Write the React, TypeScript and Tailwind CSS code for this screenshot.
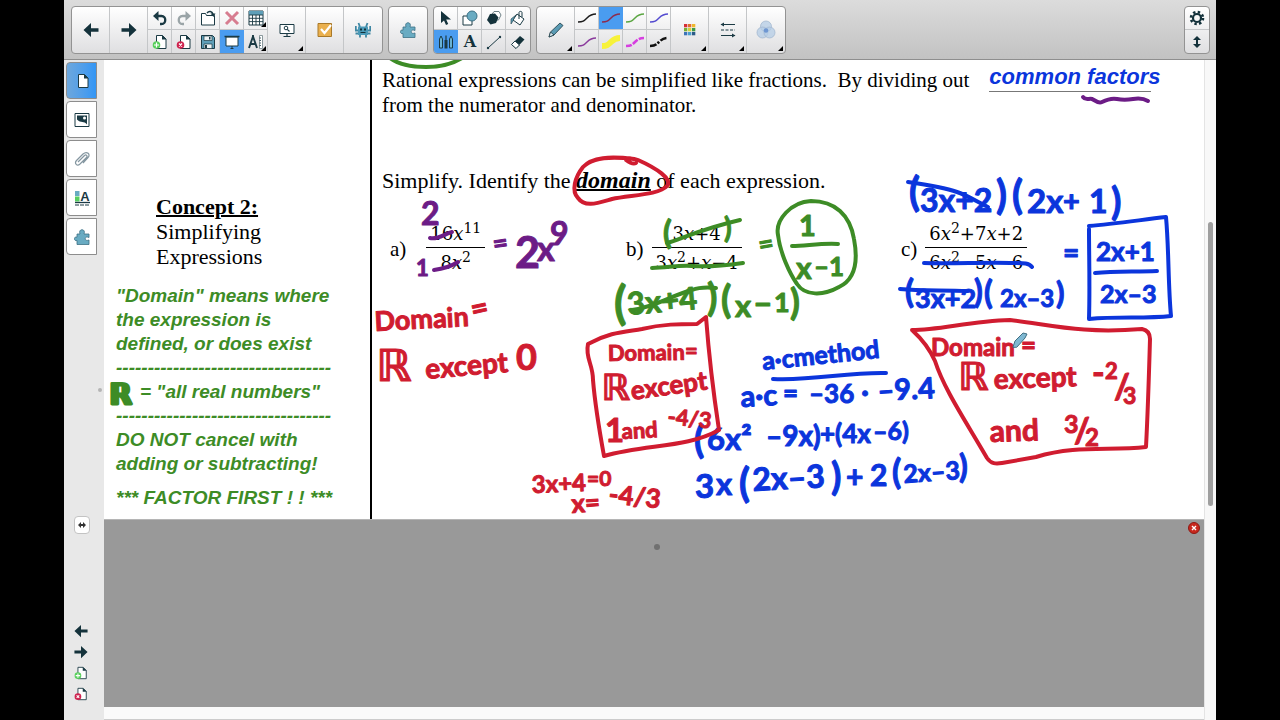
import type { ReactNode } from "react";
import { clsx } from "clsx";

const DARK = "#1b3a44";
const TEAL = "#5f9fb8";

function ToolButton({ label, wide, active, menu, children }: { label: string; wide?: boolean; active?: boolean; menu?: boolean; children: ReactNode }) {
  return (
    <button
      type="button"
      aria-label={label}
      title={label}
      className={clsx(
        "relative flex items-center justify-center",
        wide ? "w-[38px] h-[46px]" : "w-6 h-[23px]",
        active ? "bg-[#4a9cf0]" : "bg-transparent"
      )}
    >
      {children}
      {menu && (
        <svg className="absolute right-0.5 bottom-0.5 w-[5px] h-[5px]" viewBox="0 0 5 5">
          <path d="M5 0v5H0z" fill="#000" />
        </svg>
      )}
    </button>
  );
}

function ToolGroup({ children }: { children: ReactNode }) {
  return (
    <div className="flex h-12 divide-x divide-[#c4c6c8] rounded border border-[#939393] bg-linear-to-b from-white to-[#dfdfe1] overflow-hidden">
      {children}
    </div>
  );
}

function Pair({ children }: { children: ReactNode }) {
  return <div className="flex flex-col divide-y divide-[#c4c6c8] w-6 shrink-0">{children}</div>;
}

function ArrowIcon({ right, size = "w-4 h-4" }: { right?: boolean; size?: string }) {
  return (
    <svg className={clsx(size, right && "rotate-180")} viewBox="0 0 16 16">
      <path d="M.5 8L8 1v5.200h7.500v3.600H8V15z" fill="#14323b" />
    </svg>
  );
}

function PageIcon({ badge, size = "w-4 h-4" }: { badge?: "add" | "remove"; size?: string }) {
  const color = badge === "add" ? "#58cf5c" : "#cf2450";
  return (
    <svg className={size} viewBox="0 0 16 16">
      <path d="M4.500 1.500h6l3.500 3.500v9.500h-9.500z" fill="#fff" stroke={DARK} strokeWidth="1" />
      <path d="M10 1l4.500 4.500H10z" fill={DARK} />
      {badge && <circle cx="4.500" cy="11" r="3.800" fill={color} />}
      {badge === "add" && <path d="M4.500 8.500v5M2 11h5" stroke="#fff" strokeWidth="1.200" />}
      {badge === "remove" && <path d="M3 9.500l3 3M6 9.500l-3 3" stroke="#fff" strokeWidth="1.200" />}
    </svg>
  );
}

function PuzzleIcon({ size = "w-4 h-4" }: { size?: string }) {
  return (
    <svg className={size} viewBox="0 0 16 16">
      <path
        d="M3 5h3C5 2.500 6 .7 8 .7s3 1.800 2 4.300h5v3.500c-2.500-1-3.800-.2-3.800 1.200s1.300 2.300 3.800 1.300v4.500H3v-4c-1.500.5-2.700-.5-2.700-1.700S1.500 7.500 3 8.200z"
        fill="#69abc2"
        stroke="#3d7185"
        strokeWidth=".8"
      />
    </svg>
  );
}

function UndoIcon({ redo }: { redo?: boolean }) {
  const color = redo ? "#9aa4a7" : DARK;
  return (
    <svg className={clsx("w-4 h-4", redo && "-scale-x-100")} viewBox="0 0 16 16">
      <path d="M4 6h5.500c5 0 5 8 0 8H8" fill="none" stroke={color} strokeWidth="2.300" />
      <path d="M1 6l5.500-5v10z" fill={color} />
    </svg>
  );
}

function PenStroke({ color, width = 1.5, dash }: { color: string; width?: number; dash?: string }) {
  return (
    <svg className="w-5 h-4" viewBox="0 0 20 16">
      <path d="M1 12c5 0 6-1 9-4s5-4 9-4" fill="none" stroke={color} strokeWidth={width} strokeDasharray={dash} strokeLinecap="butt" />
    </svg>
  );
}

function Toolbar() {
  const grid = ["#d62f36", "#e06f2c", "#f0b72d", "#7aae35", "#cfd33c", "#3f9a46", "#3c73b8", "#4b9fce", "#2b5b88"];
  return (
    <header className="flex items-start h-[60px] pt-1.5 pl-[7px] pr-1.5 gap-[5px] border-b border-[#8e8e8e] bg-linear-to-b from-[#dcdcdc] to-[#c2c2c2]">
      <ToolGroup>
        <ToolButton label="Previous page" wide><ArrowIcon /></ToolButton>
        <ToolButton label="Next page" wide><ArrowIcon right /></ToolButton>
        <Pair>
          <ToolButton label="Undo"><UndoIcon /></ToolButton>
          <ToolButton label="Add page"><PageIcon badge="add" /></ToolButton>
        </Pair>
        <Pair>
          <ToolButton label="Redo"><UndoIcon redo /></ToolButton>
          <ToolButton label="Delete page"><PageIcon badge="remove" /></ToolButton>
        </Pair>
        <Pair>
          <ToolButton label="Open">
            <svg className="w-4 h-4" viewBox="0 0 16 16">
              <path d="M1.500 15V3.500h4l1 2h8V15z" fill="#fff" stroke={DARK} />
              <path d="M7 3c2-2.500 5-2 6 1" fill="none" stroke={DARK} strokeWidth="1.500" />
              <path d="M10.500 3.500h5L13.500 7z" fill={DARK} />
            </svg>
          </ToolButton>
          <ToolButton label="Save">
            <svg className="w-4 h-4" viewBox="0 0 16 16">
              <path d="M1.500 1.500h11l2 2v11h-13z" fill={TEAL} stroke={DARK} />
              <path d="M4 2h8v4.500H4zM4 10h8v4.500H4z" fill="#eef4f6" stroke={DARK} strokeWidth=".7" />
              <path d="M9 3h1.500v2.500H9zM5 11h2v3H5z" fill={DARK} />
            </svg>
          </ToolButton>
        </Pair>
        <Pair>
          <ToolButton label="Delete">
            <svg className="w-4 h-4" viewBox="0 0 16 16">
              <path d="M2 2l12 12M14 2L2 14" stroke="#d77d90" strokeWidth="3" />
            </svg>
          </ToolButton>
          <ToolButton label="Screen shade" active>
            <svg className="w-4 h-4" viewBox="0 0 16 16">
              <path d="M2 3h12v9H2z" fill="#fff" stroke={DARK} />
              <path d="M.5 2.500h15" stroke={DARK} strokeWidth="1.500" />
              <path d="M8 12v3M6.500 14.500h3" stroke={DARK} />
            </svg>
          </ToolButton>
        </Pair>
        <Pair>
          <ToolButton label="Table" menu>
            <svg className="w-4 h-4" viewBox="0 0 16 16">
              <path d="M1 1h14v14H1z" fill="#fff" stroke={DARK} />
              <path d="M1 1h14v4H1z" fill={TEAL} />
              <path d="M1 5h14M1 8.300h14M1 11.600h14M4.500 5v10M8 5v10M11.500 5v10" stroke={DARK} strokeWidth=".9" />
            </svg>
          </ToolButton>
          <ToolButton label="Measurement tools" menu>
            <svg className="w-4 h-4" viewBox="0 0 16 16">
              <path d="M5 1v3M4.800 3L1 14M5.200 3L9 14M2 10h5.500" fill="none" stroke={DARK} strokeWidth="1.900" />
              <path d="M11.500 1.500h3v13h-3z" fill="#fff" stroke="#6e8187" strokeWidth=".8" />
              <path d="M11.500 4H13M11.500 6.500H13M11.500 9H13M11.500 11.500H13" stroke={DARK} strokeWidth=".8" />
            </svg>
          </ToolButton>
        </Pair>
        <ToolButton label="Screen capture" wide menu>
          <svg className="w-4 h-4" viewBox="0 0 16 16">
            <path d="M1 2.500h14v9H1z" fill="#fff" stroke={DARK} />
            <circle cx="7" cy="6" r="1.800" fill="none" stroke={DARK} />
            <path d="M8.300 7.300L10.500 9.500M4.500 14.500h7M8 12v2.500" stroke={DARK} strokeWidth="1.200" />
          </svg>
        </ToolButton>
        <ToolButton label="Response" wide>
          <svg className="w-4 h-4" viewBox="0 0 16 16">
            <path d="M1 1.500h13.500v13H1z" fill="#eab04e" stroke="#a97929" />
            <path d="M4 7l3.500 4L14 3" fill="none" stroke="#fff" strokeWidth="2.200" />
          </svg>
        </ToolButton>
        <ToolButton label="Activity builder" wide>
          <svg className="w-4 h-4" viewBox="0 0 16 16">
            <path d="M3.500 1l1.500 4M12.500 1L11 5M.8 4v4.500H3M15.200 4v4.500H13M.5 11.500h15M5 12v3.500M11 12v3.500" fill="none" stroke="#3f87a3" strokeWidth="1.800" />
            <path d="M3 4.500h10v8.500H3z" fill="#4b9ab8" />
            <path d="M5 6.500h2v2H5zM9 6.500h2v2H9zM5.500 10h5v1h-5z" fill="#14323b" />
          </svg>
        </ToolButton>
      </ToolGroup>
      <ToolGroup>
        <ToolButton label="Add-ons" wide><PuzzleIcon /></ToolButton>
      </ToolGroup>
      <ToolGroup>
        <Pair>
          <ToolButton label="Select">
            <svg className="w-4 h-4" viewBox="0 0 16 16"><path d="M3 1v12l3-2.500L8 15l2.200-1-2-4.500H13z" fill="#14323b" /></svg>
          </ToolButton>
          <ToolButton label="Pens" active>
            <svg className="w-4 h-4" viewBox="0 0 16 16">
              <path d="M1.500 14V5L3 2l1.500 3v9zM11.500 14V5L13 2l1.500 3v9z" fill="#69b2d4" stroke={DARK} />
              <path d="M8 1.500v5" stroke={DARK} strokeWidth="1.200" />
              <path d="M6.500 6h3v8.500h-3z" fill={DARK} />
            </svg>
          </ToolButton>
        </Pair>
        <Pair>
          <ToolButton label="Shapes">
            <svg className="w-4 h-4" viewBox="0 0 16 16">
              <path d="M1 6h9v9H1z" fill="#fff" stroke={DARK} />
              <circle cx="10" cy="6" r="5" fill="#69abc2" stroke="#3d7185" />
            </svg>
          </ToolButton>
          <ToolButton label="Text">
            <span className="text-base leading-5 font-bold font-['DejaVu_Serif',serif] text-[#14323b]">A</span>
          </ToolButton>
        </Pair>
        <Pair>
          <ToolButton label="Regular polygons">
            <svg className="w-4 h-4" viewBox="0 0 16 16">
              <path d="M8 1.500h5l2 3.500-2.500 5H8L5.500 5z" fill="#fff" stroke="#6e8187" />
              <path d="M4 4l5-.5 3.500 4L10 13l-5.500 1.500L1 10z" fill="#14323b" />
            </svg>
          </ToolButton>
          <ToolButton label="Lines">
            <svg className="w-4 h-4" viewBox="0 0 16 16">
              <path d="M2 14L14 3" stroke={DARK} />
              <circle cx="2" cy="14" r="1.200" fill={DARK} />
              <circle cx="14" cy="3" r="1.200" fill={DARK} />
            </svg>
          </ToolButton>
        </Pair>
        <Pair>
          <ToolButton label="Fill">
            <svg className="w-4 h-4" viewBox="0 0 16 16">
              <path d="M7 4l7 5-4 6-7-5z" fill="#fff" stroke={DARK} />
              <path d="M9 9V2.500c0-1.500 3-1.500 3 0V7" fill="none" stroke={DARK} />
              <path d="M6 5L1 9v5l2-3 1-3z" fill={TEAL} stroke={DARK} strokeWidth=".6" />
            </svg>
          </ToolButton>
          <ToolButton label="Eraser">
            <svg className="w-4 h-4" viewBox="0 0 16 16">
              <path d="M1.500 10.500L10 2l4.500 3.500-8.500 9z" fill="#14323b" />
              <path d="M1.500 10.500L5 7l4.500 4L6 14.500z" fill="#fff" stroke={DARK} />
            </svg>
          </ToolButton>
        </Pair>
      </ToolGroup>
      <ToolGroup>
        <ToolButton label="Pen types" wide menu>
          <svg className="w-4 h-4" viewBox="0 0 16 16">
            <path d="M1 15l1.500-5L12 1l3 2.500L6 13z" fill="#5a9bb4" stroke={DARK} strokeWidth=".8" />
            <path d="M1 15l1.500-5L6 13z" fill="#dceaf0" stroke={DARK} strokeWidth=".8" />
          </svg>
        </ToolButton>
        <Pair>
          <ToolButton label="Black pen"><PenStroke color="#1c1c1c" /></ToolButton>
          <ToolButton label="Purple pen"><PenStroke color="#8a3a9c" /></ToolButton>
        </Pair>
        <Pair>
          <ToolButton label="Red pen" active><PenStroke color="#8c2c4e" /></ToolButton>
          <ToolButton label="Yellow highlighter"><PenStroke color="#f7f23a" width={6} /></ToolButton>
        </Pair>
        <Pair>
          <ToolButton label="Green pen"><PenStroke color="#5ba642" /></ToolButton>
          <ToolButton label="Magenta dashed pen"><PenStroke color="#d63fe0" width={2.5} dash="6 1.5" /></ToolButton>
        </Pair>
        <Pair>
          <ToolButton label="Blue pen"><PenStroke color="#544bd0" /></ToolButton>
          <ToolButton label="Black dashed pen"><PenStroke color="#111" width={2.5} dash="7 1.5 2 1.5" /></ToolButton>
        </Pair>
        <ToolButton label="Color" wide menu>
          <svg className="w-3 h-3" viewBox="0 0 12 12">
            {grid.map((c, i) => (
              <rect key={c} x={(i % 3) * 4} y={Math.floor(i / 3) * 4} width="3.300" height="3.300" fill={c} />
            ))}
          </svg>
        </ToolButton>
        <ToolButton label="Line style" wide menu>
          <svg className="w-4 h-4" viewBox="0 0 16 16">
            <path d="M1 2.500h14M1 13.500h14" stroke={DARK} />
            <path d="M1 8h14" stroke={DARK} strokeDasharray="3 1.500" />
            <path d="M4 .5v4L.5 2.500zM12 11.500v4l3.500-2z" fill={DARK} />
          </svg>
        </ToolButton>
        <ToolButton label="Transparency" wide menu>
          <svg className="w-5 h-5" viewBox="0 0 20 20">
            <circle cx="10" cy="6.500" r="5.500" fill="#b4cce6" fillOpacity=".75" stroke="#9fb5cd" strokeWidth=".7" />
            <circle cx="6.500" cy="12.500" r="5.500" fill="#b4cce6" fillOpacity=".75" stroke="#9fb5cd" strokeWidth=".7" />
            <circle cx="13.500" cy="12.500" r="5.500" fill="#b4cce6" fillOpacity=".75" stroke="#9fb5cd" strokeWidth=".7" />
            <circle cx="10" cy="10.500" r="2.300" fill="#6f97d2" />
          </svg>
        </ToolButton>
      </ToolGroup>
      <div className="ml-auto">
        <ToolGroup>
          <Pair>
            <ToolButton label="Settings">
              <svg className="w-4 h-4" viewBox="0 0 16 16">
                <circle cx="8" cy="8" r="6" fill="none" stroke="#14323b" strokeWidth="2.600" strokeDasharray="2.400 2.312" />
                <circle cx="8" cy="8" r="4" fill="none" stroke="#14323b" strokeWidth="2.200" />
              </svg>
            </ToolButton>
            <ToolButton label="Move toolbar">
              <svg className="w-3 h-3" viewBox="0 0 12 12"><path d="M6 0l4 4H7v4h3l-4 4-4-4h3V4H2z" fill="#14323b" /></svg>
            </ToolButton>
          </Pair>
        </ToolGroup>
      </div>
    </header>
  );
}

function SideTab({ label, active, children }: { label: string; active?: boolean; children: ReactNode }) {
  return (
    <button
      type="button"
      aria-label={label}
      title={label}
      className={clsx(
        "flex items-center justify-center w-[31px] h-[37px] rounded-l border border-[#8d8d8d]",
        active ? "bg-linear-to-r from-[#6da7dc] to-[#3296f5]" : "bg-white"
      )}
    >
      {children}
    </button>
  );
}

function Sidebar() {
  return (
    <nav className="relative flex flex-col w-10 shrink-0 bg-[#e8e8e8] pt-0.5 pb-[19px]">
      <div className="flex flex-col gap-0.5 pl-0.5">
        <SideTab label="Page sorter" active><PageIcon /></SideTab>
        <SideTab label="Gallery">
          <svg className="w-4 h-4" viewBox="0 0 16 16">
            <path d="M1 1.500h14v13H1z" fill="#fff" stroke={DARK} />
            <path d="M3 3.500h10v9c-3-4-6-1-10-5z" fill={DARK} />
            <circle cx="10.500" cy="6" r="1.500" fill="#fff" />
          </svg>
        </SideTab>
        <SideTab label="Attachments">
          <svg className="w-4 h-4" viewBox="0 0 16 16">
            <path d="M4 11l6.500-6.500c1.500-1.500 3.500.5 2 2L6 13c-3 2.500-6-.5-3.500-3.500l6.500-6.500c4-3.500 8 .5 5 3.500L9 12" fill="none" stroke="#8496a0" strokeWidth="1.200" />
          </svg>
        </SideTab>
        <SideTab label="Properties">
          <svg className="w-4 h-4" viewBox="0 0 16 16">
            <path d="M1 1h4.500v5H1z" fill="#69abc2" />
            <path d="M1 6.500h4.500v5H1z" fill="#57ce61" />
            <text x="11" y="11" textAnchor="middle" fontSize="13" fontWeight="700" fontFamily="Liberation Sans, sans-serif" fill={DARK}>A</text>
            <path d="M1 12.500h15" stroke={DARK} strokeWidth="1.300" />
            <path d="M1 15h15" stroke={DARK} strokeDasharray="4 1" />
          </svg>
        </SideTab>
        <SideTab label="Add-ons"><PuzzleIcon /></SideTab>
      </div>
      <span className="absolute right-0.5 top-[328px] w-1 h-1 rounded-full bg-[#b5b5b5]" />
      <button type="button" aria-label="Auto-hide" className="absolute left-2.5 top-[456px] flex items-center justify-center w-4 h-[18px] rounded border border-[#c3c3c3] bg-white">
        <svg className="w-2 h-2" viewBox="0 0 8 8"><path d="M0 4l3-3v2h2V1l3 3-3 3V5H3v2z" fill="#333" /></svg>
      </button>
      <div className="mt-auto flex flex-col gap-[7px] items-center w-8 pl-0.5">
        <button type="button" aria-label="Back"><ArrowIcon size="block w-3.5 h-3.5" /></button>
        <button type="button" aria-label="Forward"><ArrowIcon right size="block w-3.5 h-3.5" /></button>
        <button type="button" aria-label="Insert page"><PageIcon badge="add" size="block w-3.5 h-3.5" /></button>
        <button type="button" aria-label="Remove page"><PageIcon badge="remove" size="block w-3.5 h-3.5" /></button>
      </div>
    </nav>
  );
}

// text, x, baseline, size, tilt in degrees
type Note = [string, number, number, number, number?];

const purple: Note[] = [
  ["2", 421, 225, 32],
  ["1", 416, 276, 22],
  ["=", 494, 253, 26, -8],
  ["2", 515, 268, 43],
  ["x", 537, 261, 34],
  ["9", 550, 245, 32],
];

const red: Note[] = [
  ["Domain", 375, 331, 27, -3],
  ["=", 473, 320, 30, -12],
  ["ℝ", 376, 381, 44],
  ["except", 426, 379, 28, -5],
  ["0", 516, 370, 36],
  ["Domain", 608, 361, 22, -1],
  ["=", 685, 359, 22],
  ["ℝ", 601, 400, 36],
  ["except", 632, 400, 26, -8],
  ["1", 605, 442, 33],
  ["and", 622, 439, 22, -3],
  ["-4/3", 667, 424, 22, 6],
  ["3x+4", 532, 493, 24, -2],
  ["=0", 587, 486, 21],
  ["x=", 572, 513, 26, -4],
  ["-4/3", 608, 503, 26, 6],
  ["Domain", 931, 356, 24],
  ["=", 1021, 354, 26],
  ["ℝ", 958, 390, 38],
  ["except", 994, 389, 28, -2],
  ["-", 1092, 385, 34],
  ["2", 1105, 379, 22],
  ["/", 1114, 399, 34],
  ["3", 1123, 404, 23],
  ["and", 990, 442, 30, -2],
  ["3", 1064, 433, 25],
  ["/", 1074, 443, 34],
  ["2", 1085, 446, 24],
];

const green: Note[] = [
  ["(", 663, 244, 32],
  [")", 724, 238, 28],
  ["=", 760, 254, 26, -10],
  ["1", 799, 236, 29],
  ["x", 796, 279, 30],
  ["–1", 814, 276, 26],
  ["(", 614, 319, 46],
  ["3x+4", 628, 315, 31, -5],
  [")", 707, 311, 38],
  ["(", 721, 313, 38],
  ["x", 735, 317, 31],
  ["–", 753, 315, 34],
  ["1", 774, 312, 27],
  [")", 790, 315, 36],
];

const blue: Note[] = [
  ["(", 909, 206, 40],
  ["3x+2", 920, 212, 32],
  [")", 996, 209, 40],
  ["(", 1012, 209, 40],
  ["2x", 1027, 213, 33],
  ["+", 1063, 211, 29],
  ["1", 1089, 213, 32],
  [")", 1111, 215, 38],
  ["(", 905, 303, 33],
  ["3x+2", 915, 308, 27],
  [")", 974, 303, 32],
  ["(", 984, 304, 32],
  ["2x–3", 1000, 307, 24],
  [")", 1056, 304, 31],
  ["=", 1063, 263, 28],
  ["2x+1", 1096, 261, 26],
  ["2x–3", 1100, 303, 25],
  ["a·cmethod", 763, 370, 25, -6],
  ["a·c", 741, 407, 29, -3],
  ["=", 783, 402, 26],
  ["–36", 809, 403, 26],
  [".", 861, 396, 34],
  ["–9.4", 878, 401, 29, -3],
  ["(", 694, 453, 38],
  ["6x²", 707, 450, 31],
  ["–9x)", 766, 446, 28],
  ["+(4x", 820, 443, 26],
  ["–6)", 873, 440, 25],
  ["3", 695, 498, 33],
  ["x", 716, 495, 31],
  ["(", 739, 497, 40],
  ["2x–3", 753, 491, 32, -3],
  [")", 831, 490, 38],
  ["+", 846, 488, 30],
  ["2", 870, 486, 30],
  ["(", 892, 484, 34],
  ["2x–3", 904, 483, 25, -4],
  [")", 959, 478, 32],
];

function Handwriting({ notes, className }: { notes: Note[]; className: string }) {
  return (
    <g className={className}>
      {notes.map(([text, x, y, size, tilt = 0], i) => (
        <text key={i} x={x} y={y} fontSize={size} transform={`rotate(${tilt} ${x} ${y})`}>
          {text}
        </text>
      ))}
    </g>
  );
}

function InkLayer() {
  return (
    <svg
      className="absolute left-0 top-0 w-[1100px] h-[459px] pointer-events-none font-['Lato','DejaVu_Sans',sans-serif] font-bold"
      viewBox="104 60 1100 459"
      strokeLinecap="round"
      strokeLinejoin="round"
    >
      <Handwriting notes={purple} className="fill-[#6c1c86] stroke-[#6c1c86]" />
      <Handwriting notes={green} className="fill-[#3d8c26] stroke-[#3d8c26]" />
      <Handwriting notes={blue} className="fill-[#0b35dc] stroke-[#0b35dc]" />
      <Handwriting notes={red} className="fill-[#d01c30] stroke-[#d01c30]" />
      <text x="109" y="404" fontSize="28" className="fill-[#3d8c26] stroke-[#3d8c26]" strokeWidth="3">ℝ</text>
      <g fill="none" strokeWidth="4">
        <g stroke="#6c1c86">
          <path d="M1083 97c3 4 6 1 9 2s6 5 10 3 10-4 15-3 10 1 16 0 10-1 15 2" />
          <path d="M430 238c8 2 14-4 22-6" />
          <path d="M434 270c8-1 16-3 24-8" />
        </g>
        <g stroke="#3d8c26">
          <path d="M390 58c8 6 20 9 36 9s28-4 36-9" />
          <path d="M667 243c14-4 34-14 73-23" />
          <path d="M652 268c15 0 25-3 40-2s30 0 51-3" />
          <path d="M792 246c14 0 28-3 46-2" />
          <path d="M632 310c24-3 40-15 60-20 8-3 14-3 24-2" />
          <path d="M811 201c-20 1-36 19-33 34 2 18 12 39 19 49 8 12 26 12 42 3 17-8 19-27 15-48-4-24-19-38-43-38z" />
        </g>
        <g stroke="#0b35dc">
          <path d="M908 182c14 2 35 5 49 10 12 4 22 11 31 15" />
          <path d="M924 263c30 1 60-1 90 0 10 0 15 0 18 4" />
          <path d="M900 289c20 2 40 1 68 2" />
          <path d="M1089 229c0 28 1 58 0 90 30-3 55 0 82-3-3-32-2-66-5-99-26 3-52 7-77 9" />
          <path d="M1095 273c20-2 40-1 62-2" />
          <path d="M773 379c40 2 74-7 113-6" />
        </g>
        <g stroke="#d01c30">
          <path d="M634 159c-24-3-42-2-51 8-8 10-12 24-5 31 7 10 20 5 34 1 18-4 47-4 55-13 6-7-11-18-29-26-5-2-12-2-12 0 4 3 8 4 10 3" />
          <path d="M588 344c22-12 36-12 54-15 20-5 38-5 55-5l9-7c3 40 8 80 13 113-32 18-72 14-115 26-6-33-9-52-11-76 0-16-8-22-5-36z" />
          <path d="M912 330c28 0 58-9 98-10 42 5 72 14 132 9 5 1 8 4 8 10-1 35-2 70-4 108-38 4-70-2-110 10l-34 6c-6 1-11 1-15-5-22-38-43-69-52-97-5-11-12-21-22-30" />
        </g>
      </g>
      <path d="M1013 347l2-6 8-8 4 1-2 4-8 9z" fill="#7fb8d2" stroke="#3f6f83" strokeWidth="1" />
    </svg>
  );
}

function Fraction({ top, bottom }: { top: ReactNode; bottom: ReactNode }) {
  return (
    <span className="inline-flex flex-col text-center text-lg font-['DejaVu_Serif',serif]">
      <span className="border-b border-black px-1 leading-[26px]">{top}</span>
      <span className="px-1 leading-[30px]">{bottom}</span>
    </span>
  );
}

function Sup({ children }: { children: ReactNode }) {
  return <sup className="text-sm leading-none">{children}</sup>;
}

function Lesson() {
  return (
    <main className="relative flex min-h-[459px] bg-white text-black overflow-hidden font-['Liberation_Serif',serif]">
      <section className="w-[268px] shrink-0 border-r-2 border-black pt-[134px] pl-3">
        <div className="pl-10 text-[22px] leading-[25px]">
          <h2 className="font-bold underline decoration-2">Concept 2:</h2>
          <p>Simplifying</p>
          <p>Expressions</p>
        </div>
        <div className="mt-[15px] font-['Liberation_Sans',sans-serif] font-bold italic text-[19px] leading-6 text-[#3d8c26] whitespace-nowrap">
          <p>"Domain" means where</p>
          <p>the expression is</p>
          <p>defined, or does exist</p>
          <p>----------------------------------</p>
          <p className="pl-6">= "all real numbers"</p>
          <p>----------------------------------</p>
          <p>DO NOT cancel with</p>
          <p>adding or subtracting!</p>
          <p className="mt-2.5">*** FACTOR FIRST ! ! ***</p>
        </div>
      </section>
      <section className="flex-1 pt-2 pl-2.5 whitespace-nowrap">
        <div className="flex text-[21px] leading-[25px]">
          <p className="whitespace-pre">Rational expressions can be simplified like fractions.  By dividing out</p>
          <span className="relative ml-5 w-[162px] h-6 border-b border-[#777]">
            <span className="absolute left-0 -top-1 font-['Liberation_Sans',sans-serif] font-bold italic text-[22px] text-[#0b35dc]">common factors</span>
          </span>
        </div>
        <p className="text-[21px] leading-[25px]">from the numerator and denominator.</p>
        <p className="mt-[50px] text-[22px] leading-[25px]">
          Simplify. Identify the <b className="italic text-2xl leading-none underline decoration-2">domain</b> of each expression.
        </p>
        <ol className="mt-7 pl-2 grid grid-cols-[236px_275px_1fr] text-[21px]">
          <li className="flex items-center gap-5">
            <span>a)</span>
            <Fraction top={<>16<i>x</i><Sup>11</Sup></>} bottom={<>8<i>x</i><Sup>2</Sup></>} />
          </li>
          <li className="flex items-center gap-2">
            <span>b)</span>
            <Fraction top={<>3<i>x</i>+4</>} bottom={<>3<i>x</i><Sup>2</Sup>+<i>x</i>−4</>} />
          </li>
          <li className="flex items-center gap-2">
            <span>c)</span>
            <Fraction top={<>6<i>x</i><Sup>2</Sup>+7<i>x</i>+2</>} bottom={<>6<i>x</i><Sup>2</Sup>−5<i>x</i>−6</>} />
          </li>
        </ol>
      </section>
      <InkLayer />
    </main>
  );
}

export default function App() {
  return (
    <div className="min-h-screen bg-black px-16 flex flex-col">
      <Toolbar />
      <div className="flex flex-1">
        <Sidebar />
        <div className="flex flex-col flex-1 min-w-0">
          <Lesson />
          <div className="relative flex-1 bg-[#999] border-t border-[#b5b5b5]">
            <span className="absolute left-1/2 top-6 w-1.5 h-1.5 rounded-full bg-[#707070]" />
            <button type="button" aria-label="Close screen shade" className="absolute right-1 top-0.5 w-3 h-3">
              <svg className="block w-3 h-3" viewBox="0 0 12 12">
                <circle cx="6" cy="6" r="5.500" fill="#c8281e" stroke="#8e1a14" />
                <path d="M4 4l4 4M8 4l-4 4" stroke="#fff" strokeWidth="1.400" />
              </svg>
            </button>
          </div>
          <div className="h-[13px] bg-[#fafafa] border-b border-[#ccc]" />
        </div>
        <div className="w-3 shrink-0 bg-[#f8f8f8] border-l border-[#e4e4e4] pt-[162px] pl-[3px]">
          <div className="w-[5px] h-[284px] rounded-full bg-[#9f9f9f]" />
        </div>
      </div>
    </div>
  );
}
